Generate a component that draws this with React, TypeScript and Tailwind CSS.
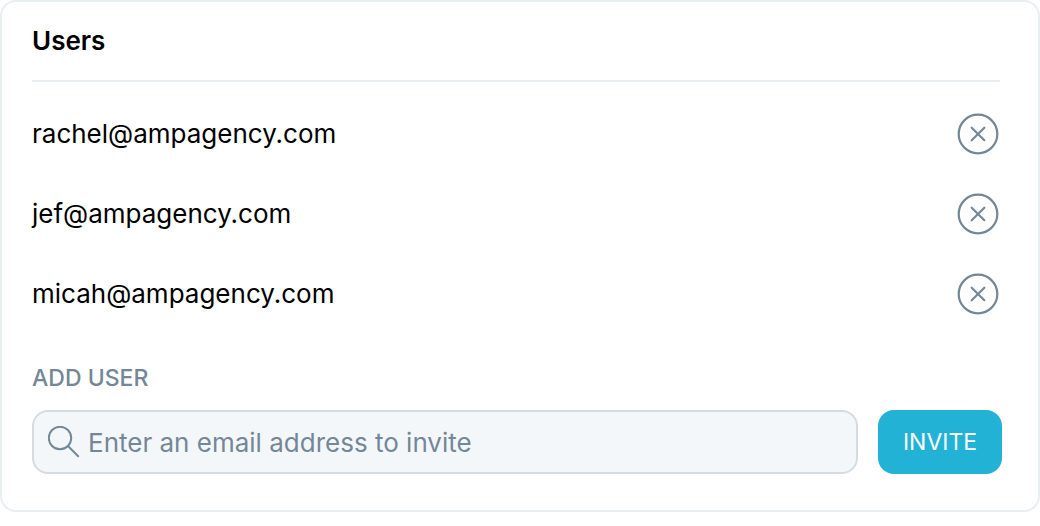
import { useState, type FormEvent } from "react";

const INITIAL_USERS = [
  "rachel@ampagency.com",
  "jef@ampagency.com",
  "micah@ampagency.com",
];

function RemoveIcon() {
  return (
    <svg
      viewBox="0 0 44 44"
      className="size-11"
      fill="none"
      stroke="currentColor"
      strokeWidth="2.2"
      strokeLinecap="round"
      aria-hidden="true"
    >
      <circle cx="22" cy="22" r="19.3" />
      <path d="M15.7 15.7l12.6 12.6M28.3 15.7L15.7 28.3" />
    </svg>
  );
}

function SearchIcon() {
  return (
    <svg
      viewBox="0 0 32 32"
      className="size-8 shrink-0"
      fill="none"
      stroke="currentColor"
      strokeWidth="2"
      strokeLinecap="round"
      aria-hidden="true"
    >
      <circle cx="12" cy="12" r="11.2" />
      <path d="M20 20l10.2 10.2" />
    </svg>
  );
}

interface UserRowProps {
  email: string;
  onRemove: () => void;
}

function UserRow({ email, onRemove }: UserRowProps) {
  return (
    <li className="flex h-20 items-center justify-between">
      <span className="text-[26px] leading-8 text-black">{email}</span>
      <button
        type="button"
        aria-label={`Remove ${email}`}
        className="cursor-pointer rounded-full text-[#748797]"
        onClick={onRemove}
      >
        <RemoveIcon />
      </button>
    </li>
  );
}

export default function App() {
  const [users, setUsers] = useState(INITIAL_USERS);
  const [email, setEmail] = useState("");

  const invite = (event: FormEvent) => {
    event.preventDefault();
    const value = email.trim();
    if (!value || users.includes(value)) return;
    setUsers([...users, value]);
    setEmail("");
  };

  return (
    <section className="rounded-2xl border-2 border-[#e8eff3] bg-white pr-9 pb-9 pl-[30px] font-['Inter',sans-serif]">
      {/* The list stops just short of the form's right edge */}
      <div className="pr-0.5">
        <header className="flex h-20 items-center border-b-2 border-[#e8eff3]">
          <h2 className="text-[26px] leading-8 font-semibold text-black">Users</h2>
        </header>

        <ul className="py-3">
          {users.map((user) => (
            <UserRow
              key={user}
              email={user}
              onRemove={() => setUsers(users.filter((u) => u !== user))}
            />
          ))}
        </ul>
      </div>

      <form className="pt-4" onSubmit={invite}>
        <label htmlFor="invite-email" className="block text-[23px] leading-8 font-medium text-[#748797]">
          ADD USER
        </label>

        <div className="mt-4 flex gap-5">
          <div className="flex h-16 min-w-0 flex-1 items-center gap-2 rounded-2xl border-2 border-[#d5dce1] bg-[#f3f7fa] px-3.5 text-[#748797]">
            <SearchIcon />
            <input
              id="invite-email"
              type="email"
              value={email}
              onChange={(e) => setEmail(e.target.value)}
              placeholder="Enter an email address to invite"
              className="h-full min-w-0 flex-1 bg-transparent text-[26px] text-black outline-none placeholder:text-[#748797]"
            />
          </div>
          <button
            type="submit"
            className="h-16 min-w-31 cursor-pointer rounded-2xl bg-[#21b2d5] px-6 text-[23px] text-white"
          >
            INVITE
          </button>
        </div>
      </form>
    </section>
  );
}
